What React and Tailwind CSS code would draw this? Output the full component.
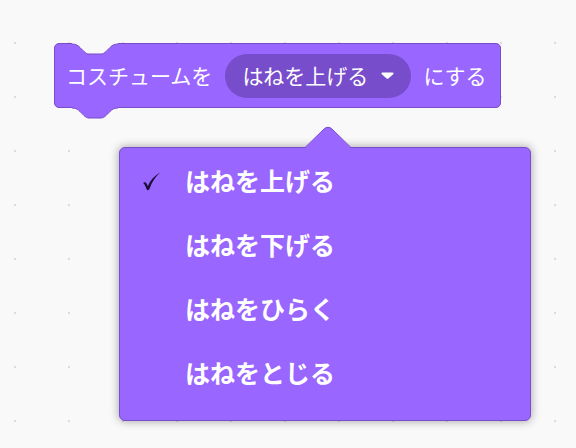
export default function App() {
  const items = ["はねを上げる", "はねを下げる", "はねをひらく", "はねをとじる"]

  return (
    <div
      className="w-[576px] h-[448px] overflow-hidden bg-[#f9f9f9] bg-[radial-gradient(circle,#dcdcdc_1px,transparent_1.6px)] [background-size:54px_54px] [background-position:-12px_16px] pt-[43px]"
      style={{ fontFamily: '"Noto Sans CJK JP", "Noto Sans", sans-serif' }}
    >
      {/* stack block */}
      <div className="relative ml-[54px] w-fit h-[65px] flex items-center rounded-[5px] border border-[#774dcb] bg-[#9966ff] pl-[11px] pr-[13px] text-white text-[21px]">
        <svg className="absolute left-[17px] -top-[1px]" width="46" height="12" viewBox="0 0 46 12">
          <path d="M0,0 L0,1 C4,1 6,2.5 8,4.5 L12,8.5 C13.5,10 15,11 17,11 H29 C31,11 32.5,10 34,8.5 L38,4.5 C40,2.5 42,1 46,1 L46,0 Z" fill="#f9f9f9" />
          <path d="M0,1 C4,1 6,2.5 8,4.5 L12,8.5 C13.5,10 15,11 17,11 H29 C31,11 32.5,10 34,8.5 L38,4.5 C40,2.5 42,1 46,1" fill="none" stroke="#774dcb" strokeWidth="1" />
        </svg>
        <svg className="absolute left-[17px] top-[63px]" width="46" height="13" viewBox="0 0 46 13">
          <path d="M0,0 L0,1 C4,1 6,2.5 8,4.5 L12,8.5 C13.5,10 15,11 17,11 H29 C31,11 32.5,10 34,8.5 L38,4.5 C40,2.5 42,1 46,1 L46,0 Z" fill="#9966ff" />
          <path d="M0,1 C4,1 6,2.5 8,4.5 L12,8.5 C13.5,10 15,11 17,11 H29 C31,11 32.5,10 34,8.5 L38,4.5 C40,2.5 42,1 46,1" fill="none" stroke="#774dcb" strokeWidth="1" />
        </svg>
        <span>コスチュームを</span>
        <div className="ml-[13px] h-[44px] flex items-center gap-[12px] rounded-full bg-[#774dcb] pl-[17px] pr-[16px]">
          <span>はねを上げる</span>
          <svg width="15" height="9" viewBox="0 0 14 9">
            <path d="M2,1.5 H12 C13,1.5 13.4,2.5 12.7,3.2 L7.8,7.6 C7.4,8 6.6,8 6.2,7.6 L1.3,3.2 C0.6,2.5 1,1.5 2,1.5 Z" fill="#ffffff" />
          </svg>
        </div>
        <span className="ml-[12px]">にする</span>
      </div>

      {/* dropdown menu */}
      <div className="relative ml-[119px] mt-[39px] w-[412px] h-[274px] rounded-[6px] border border-[#774dcb] bg-[#9966ff] shadow-[0_0_8px_1px_rgba(0,0,0,0.3)] pt-[1px]">
        <svg className="absolute left-[185px] -top-[22px]" width="46" height="23" viewBox="0 0 46 23">
          <path d="M0,22 L19,3 C21.2,0.8 24.8,0.8 27,3 L46,22 L46,23 L0,23 Z" fill="#9966ff" />
          <path d="M0,21.5 L19,3 C21.2,0.8 24.8,0.8 27,3 L46,21.5" fill="none" stroke="#774dcb" strokeWidth="1" />
        </svg>
        {items.map((label, i) => (
          <div key={label} className="h-[64px] flex items-center">
            <span className="w-[65px] pl-[22px] flex items-center">
              {i === 0 && (
                <svg width="19" height="19" viewBox="0 0 18 18">
                  <path d="M1,10.2 C2.4,9.2 3.8,9.8 4.6,11.4 L5.6,13.4 C8,8.2 11.4,3.8 17,0.8 C12.6,4.8 9.4,9.6 7,16.2 C6.5,17.5 5,17.6 4.5,16.5 L3.2,13.6 C2.6,12.2 2,11.1 1,10.2 Z" fill="#1c0d36" />
                </svg>
              )}
            </span>
            <span className="text-white font-bold text-[25px]">{label}</span>
          </div>
        ))}
      </div>
    </div>
  )
}
